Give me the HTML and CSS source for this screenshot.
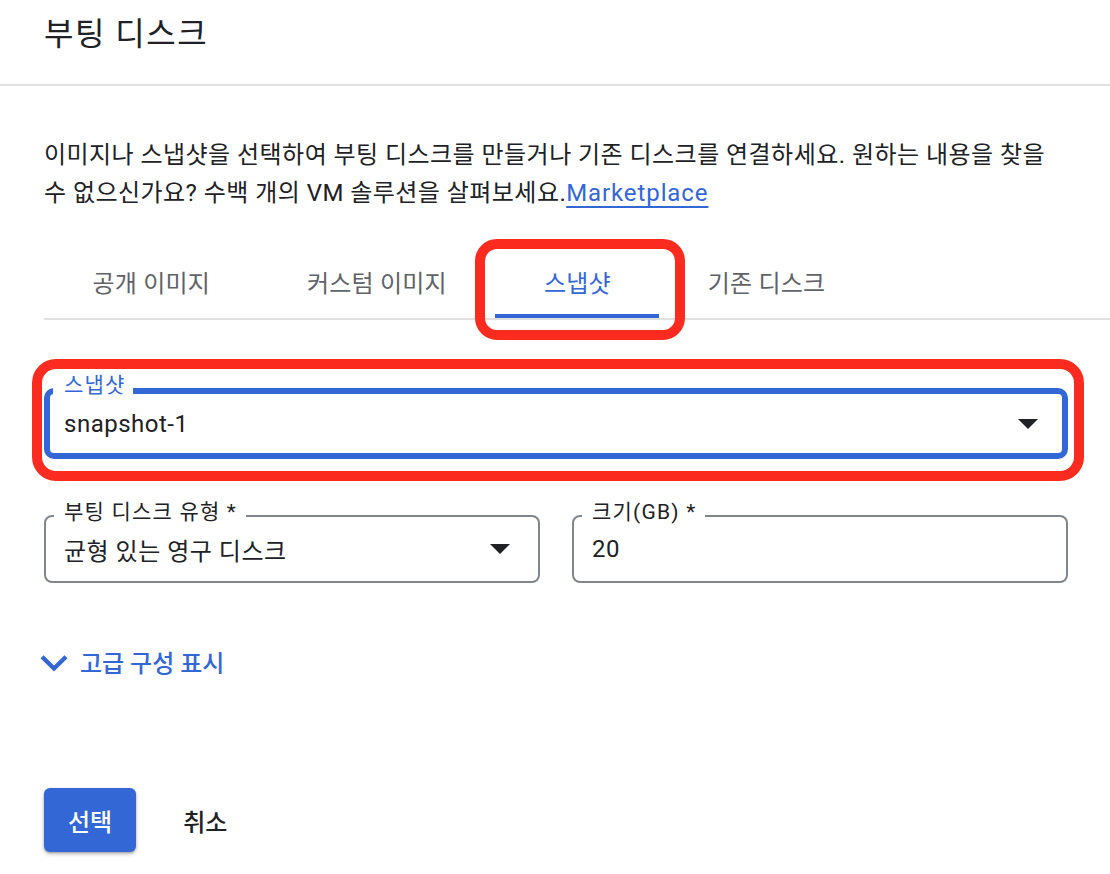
FILE: index.html
```html
<!DOCTYPE html>
<html lang="ko">
<head>
<meta charset="utf-8">
<title>부팅 디스크</title>
<link rel="stylesheet" href="styles.css">
</head>
<body>
<div class="dialog">
  <header class="dialog-header">
    <h1 class="title">부팅 디스크</h1>
  </header>
  <main class="dialog-body">
    <p class="intro">이미지나 스냅샷을 선택하여 부팅 디스크를 만들거나 기존 디스크를 연결하세요. 원하는 내용을 찾을 수 없으신가요? 수백 개의 VM 솔루션을 살펴보세요.<a class="link" href="#">Marketplace</a></p>

    <nav class="tabs">
      <div class="tab">공개 이미지</div>
      <div class="tab">커스텀 이미지</div>
      <div class="tab tab-active">스냅샷<span class="annot annot-tab"></span></div>
      <div class="tab">기존 디스크</div>
    </nav>

    <div class="snapshot-row">
      <div class="field field-focused">
        <span class="field-label">스냅샷</span>
        <span class="field-value">snapshot-1</span>
        <span class="caret"></span>
      </div>
      <span class="annot annot-field"></span>
    </div>

    <div class="field-grid">
      <div class="field">
        <span class="field-label">부팅 디스크 유형 *</span>
        <span class="field-value">균형 있는 영구 디스크</span>
        <span class="caret"></span>
      </div>
      <div class="field">
        <span class="field-label">크기(GB) *</span>
        <span class="field-value">20</span>
      </div>
    </div>

    <a class="advanced" href="#">
      <svg class="chevron" width="28" height="18" viewBox="0 0 28 18" aria-hidden="true">
        <path d="M0.5 3.2 L3.6 0.2 L14 10.4 L24.4 0.2 L27.5 3.2 L14 16.6 Z" fill="#3367d6"/>
      </svg>
      <span>고급 구성 표시</span>
    </a>

    <div class="actions">
      <button class="btn btn-primary" type="button">선택</button>
      <button class="btn btn-text" type="button">취소</button>
    </div>
  </main>
</div>
</body>
</html>
```
FILE: styles.css
```css
* {
  box-sizing: border-box;
}

body {
  margin: 0;
  background: #ffffff;
  font-family: Roboto, "Noto Sans CJK KR", sans-serif;
  color: #202124;
}

.dialog-header {
  height: 86px;
  padding: 14px 44px 0;
  border-bottom: 2px solid #e0e0e0;
}

.title {
  margin: 0;
  font-size: 32px;
  font-weight: 400;
  line-height: 40px;
  letter-spacing: 1.5px;
}

.dialog-body {
  padding: 50px 42px 40px 44px;
}

.intro {
  max-width: 1012px;
  margin: 0;
  font-size: 24px;
  line-height: 38px;
  letter-spacing: 0.45px;
}

.link {
  color: #3367d6;
  letter-spacing: 0.9px;
  text-decoration: underline;
  text-decoration-thickness: 2px;
  text-underline-offset: 5px;
}

.tabs {
  display: flex;
  margin: 32px -42px 0 0;
  border-bottom: 2px solid #e0e0e0;
}

.tab {
  height: 74px;
  padding: 4px 48.5px 0;
  display: flex;
  align-items: center;
  font-size: 24px;
  letter-spacing: 0.2px;
  color: #5f6368;
  border-bottom: 4px solid transparent;
}

.tab-active {
  position: relative;
  color: #3367d6;
  border-bottom-color: #3367d6;
}

.annot {
  position: absolute;
  border: 10px solid #fc2b1f;
  border-radius: 22px;
  pointer-events: none;
}

.annot-tab {
  left: -20px;
  right: -26px;
  top: -5px;
  bottom: -26px;
}

.snapshot-row {
  position: relative;
  margin-top: 68px;
}

.annot-field {
  left: -12px;
  right: -16px;
  top: -29px;
  bottom: -22px;
  border-radius: 24px;
}

.field {
  position: relative;
  display: flex;
  align-items: center;
  height: 68px;
  padding: 0 28px 0 18px;
  border: 2px solid #80868b;
  border-radius: 8px;
  font-size: 24px;
}

.field-focused {
  height: 71px;
  padding: 0 24px 0 14px;
  border: 6px solid #3367d6;
  border-radius: 10px;
}

.field-label {
  position: absolute;
  top: -17px;
  left: 8px;
  padding: 0 9px 0 10px;
  background: #ffffff;
  font-size: 21px;
  line-height: 24px;
  letter-spacing: 1.2px;
  color: #202124;
}

.field-focused .field-label {
  top: -21px;
  left: 3px;
  padding: 0 7px 0 11px;
  color: #3367d6;
}

.field-value {
  flex: 1;
  letter-spacing: 0.5px;
}

.caret {
  width: 0;
  height: 0;
  border-left: 10px solid transparent;
  border-right: 10px solid transparent;
  border-top: 10px solid #202124;
}

.field-grid {
  display: grid;
  grid-template-columns: 1fr 1fr;
  gap: 32px;
  margin-top: 56px;
}

.advanced {
  display: flex;
  align-items: center;
  gap: 12px;
  width: max-content;
  margin: 65px 0 0 -4px;
  color: #3367d6;
  font-size: 24px;
  font-weight: 500;
  line-height: 32px;
  text-decoration: none;
}

.chevron {
  display: block;
}

.actions {
  display: flex;
  gap: 23px;
  margin-top: 108px;
}

.btn {
  height: 64px;
  padding: 0 24px;
  border: 0;
  border-radius: 6px;
  background: none;
  font-family: inherit;
  font-size: 24px;
  font-weight: 500;
  color: #202124;
}

.btn-primary {
  background: #3367d6;
  color: #ffffff;
  box-shadow: 0 2px 4px rgba(0, 0, 0, 0.25), 0 1px 2px rgba(0, 0, 0, 0.2);
}
```
